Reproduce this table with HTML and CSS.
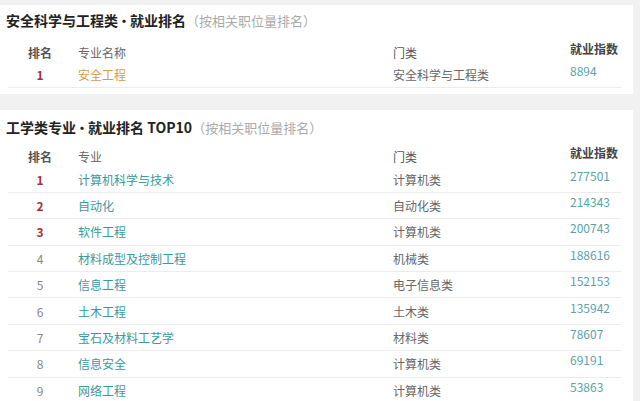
FILE: index.html
```html
<!DOCTYPE html>
<html lang="zh-CN">
<head>
  <meta charset="UTF-8">
  <meta name="viewport" content="width=device-width, initial-scale=1.0">
  <title>就业排名</title>
  <link rel="stylesheet" href="styles.css">
</head>
<body>

  <section class="card card-first">
    <h2 class="card-title">安全科学与工程类<span class="dot">•</span>就业排名<span class="note">（按相关职位量排名）</span></h2>
    <div class="rank-table">
      <div class="row head">
        <div class="c-rank">排名</div>
        <div class="c-major">专业名称</div>
        <div class="c-cat">门类</div>
        <div class="c-index">就业指数</div>
      </div>
      <div class="row">
        <div class="c-rank top">1</div>
        <div class="c-major orange">安全工程</div>
        <div class="c-cat">安全科学与工程类</div>
        <div class="c-index">8894</div>
      </div>
    </div>
  </section>

  <section class="card card-second">
    <h2 class="card-title">工学类专业<span class="dot">•</span>就业排名 TOP10<span class="note">（按相关职位量排名）</span></h2>
    <div class="rank-table">
      <div class="row head">
        <div class="c-rank">排名</div>
        <div class="c-major">专业</div>
        <div class="c-cat">门类</div>
        <div class="c-index">就业指数</div>
      </div>
      <div class="row">
        <div class="c-rank top">1</div>
        <div class="c-major">计算机科学与技术</div>
        <div class="c-cat">计算机类</div>
        <div class="c-index">277501</div>
      </div>
      <div class="row">
        <div class="c-rank top">2</div>
        <div class="c-major">自动化</div>
        <div class="c-cat">自动化类</div>
        <div class="c-index">214343</div>
      </div>
      <div class="row">
        <div class="c-rank top">3</div>
        <div class="c-major">软件工程</div>
        <div class="c-cat">计算机类</div>
        <div class="c-index">200743</div>
      </div>
      <div class="row">
        <div class="c-rank">4</div>
        <div class="c-major">材料成型及控制工程</div>
        <div class="c-cat">机械类</div>
        <div class="c-index">188616</div>
      </div>
      <div class="row">
        <div class="c-rank">5</div>
        <div class="c-major">信息工程</div>
        <div class="c-cat">电子信息类</div>
        <div class="c-index">152153</div>
      </div>
      <div class="row">
        <div class="c-rank">6</div>
        <div class="c-major">土木工程</div>
        <div class="c-cat">土木类</div>
        <div class="c-index">135942</div>
      </div>
      <div class="row">
        <div class="c-rank">7</div>
        <div class="c-major">宝石及材料工艺学</div>
        <div class="c-cat">材料类</div>
        <div class="c-index">78607</div>
      </div>
      <div class="row">
        <div class="c-rank">8</div>
        <div class="c-major">信息安全</div>
        <div class="c-cat">计算机类</div>
        <div class="c-index">69191</div>
      </div>
      <div class="row">
        <div class="c-rank">9</div>
        <div class="c-major">网络工程</div>
        <div class="c-cat">计算机类</div>
        <div class="c-index">53863</div>
      </div>
    </div>
  </section>

</body>
</html>
```

FILE: styles.css
```css
/* General Styles */
* {
  margin: 0;
  padding: 0;
  box-sizing: border-box;
  font-family: "Noto Sans CJK SC", "Liberation Sans", sans-serif;
}

body {
  background-color: #f1f1f1;
  overflow: hidden;
}

.card {
  background-color: white;
  margin-right: 7px;
}

.card-first {
  margin-top: 5px;
  padding-bottom: 6px;
}

.card-second {
  margin-top: 16px;
}

.card-title {
  display: flex;
  align-items: center;
  padding-left: 6px;
  font-size: 14px;
  font-weight: bold;
  color: #222;
  white-space: pre;
}

.card-first .card-title {
  height: 30px;
}

.card-second .card-title {
  height: 34px;
}

.dot {
  display: inline-flex;
  justify-content: center;
  width: 12px;
  font-size: 13px;
}

.note {
  font-size: 13px;
  font-weight: normal;
  color: #aaa;
  text-spacing-trim: space-all;
}

.card-first .rank-table {
  margin-top: 5px;
}

.rank-table {
  margin: 0 12px 0 8px;
}

.row {
  display: grid;
  grid-template-columns: 64px 321px 177px 1fr;
  align-items: center;
  height: 26.4px;
  font-size: 12px;
  border-bottom: 1px solid #ececec;
}

.row.head {
  height: 22px;
  border-bottom: none;
}

.c-rank {
  text-align: center;
  color: #888;
}

.c-major {
  padding-left: 6px;
  color: #3a9a9e;
}

.c-cat {
  color: #666;
}

.c-index {
  color: #5aa4a6;
  padding-bottom: 8px;
}

.head .c-rank {
  color: #555;
  font-weight: bold;
}

.head .c-major {
  color: #666;
}

.head .c-cat {
  color: #555;
}

.head .c-index {
  color: #444;
  font-weight: bold;
}

.c-rank.top {
  color: #a8303f;
  font-weight: bold;
}

.c-major.orange {
  color: #d69a4c;
}
```
